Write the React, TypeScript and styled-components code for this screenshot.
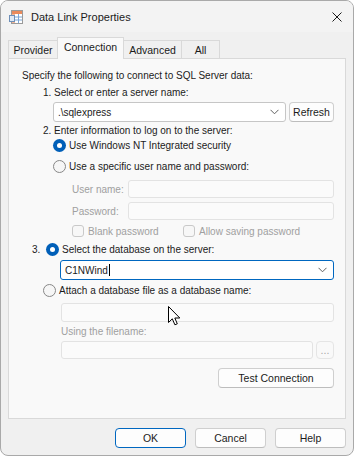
import React from "react";
import styled, { createGlobalStyle } from "styled-components";

const Global = createGlobalStyle`
  html, body { margin: 0; padding: 0; background: #ffffff; }
  body { font-family: "Liberation Sans", Arial, sans-serif; }
  * { box-sizing: border-box; }
`;

const Window = styled.div`
  position: relative;
  width: 354px;
  height: 456px;
  background: #f0f0f0;
  border: 1px solid #a9a9a9;
  border-radius: 8px;
  display: flex;
  flex-direction: column;
  overflow: hidden;
  font-family: "Liberation Sans", Arial, sans-serif;
  font-size: 10px;
  color: #1b1b1b;
`;

const TitleBar = styled.div`
  height: 31px;
  flex: none;
  display: flex;
  align-items: center;
  padding-left: 8px;
  background: #f3f3f3;
`;

const Title = styled.span`
  margin-left: 6px;
  font-size: 11px;
  color: #1b1b1b;
`;

const CloseBox = styled.div`
  margin-left: auto;
  width: 32px;
  height: 31px;
  display: flex;
  align-items: center;
  justify-content: center;
`;

const Body = styled.div`
  flex: 1;
  display: flex;
  flex-direction: column;
  padding: 5px 7px 0 7px;
`;

const TabStrip = styled.div`
  height: 22px;
  display: flex;
  align-items: flex-end;
  margin-bottom: -1px;
  position: relative;
  z-index: 1;
`;

const Tab = styled.div<{ $w: number; $active?: boolean }>`
  width: ${(p) => p.$w}px;
  height: ${(p) => (p.$active ? 22 : 18)}px;
  margin-bottom: ${(p) => (p.$active ? 0 : 1)}px;
  background: ${(p) => (p.$active ? "#f9f9f9" : "#f0f0f0")};
  border: 1px solid #d9d9d9;
  border-bottom: none;
  display: flex;
  align-items: ${(p) => (p.$active ? "flex-start" : "center")};
  justify-content: center;
  padding-top: ${(p) => (p.$active ? 3 : 0)}px;
  font-size: 10.5px;
  color: #1b1b1b;
  & + & {
    margin-left: -1px;
  }
`;

const Panel = styled.div`
  height: 361px;
  flex: none;
  background: #f9f9f9;
  border: 1px solid #d9d9d9;
  display: flex;
  flex-direction: column;
  padding-right: 11px;
`;

const Line = styled.div<{ $mt: number; $ml: number; $dim?: boolean }>`
  height: 14px;
  line-height: 14px;
  margin-top: ${(p) => p.$mt}px;
  margin-left: ${(p) => p.$ml}px;
  color: ${(p) => (p.$dim ? "#a0a0a0" : "#1b1b1b")};
  white-space: nowrap;
`;

const FieldRow = styled.div<{ $mt: number; $ml: number; $h: number }>`
  height: ${(p) => p.$h}px;
  margin-top: ${(p) => p.$mt}px;
  margin-left: ${(p) => p.$ml}px;
  display: flex;
  align-items: center;
  gap: 3px;
`;

const OptionRow = styled.label<{ $mt: number; $ml: number }>`
  height: 14px;
  margin-top: ${(p) => p.$mt}px;
  margin-left: ${(p) => p.$ml}px;
  display: flex;
  align-items: center;
  gap: 3px;
  white-space: nowrap;
`;

const StepNum = styled.span`
  width: 11px;
  flex: none;
`;

const Radio = styled.span<{ $checked?: boolean }>`
  width: 13px;
  height: 13px;
  flex: none;
  border-radius: 50%;
  display: flex;
  align-items: center;
  justify-content: center;
  background: ${(p) => (p.$checked ? "#005fb8" : "#f6f6f6")};
  border: ${(p) => (p.$checked ? "none" : "1px solid #878787")};
  &::after {
    content: "";
    display: ${(p) => (p.$checked ? "block" : "none")};
    width: 5px;
    height: 5px;
    border-radius: 50%;
    background: #ffffff;
  }
`;

const CheckBox = styled.span`
  width: 12px;
  height: 12px;
  flex: none;
  border: 1px solid #c9c9c9;
  border-radius: 3px;
  background: #f7f7f7;
`;

const CheckGroup = styled.span<{ $w: number }>`
  width: ${(p) => p.$w}px;
  display: flex;
  align-items: center;
  gap: 4px;
  color: #a0a0a0;
`;

const FieldLabel = styled.span`
  width: 53px;
  flex: none;
  color: #a0a0a0;
`;

const Combo = styled.div<{ $focused?: boolean }>`
  flex: 1;
  height: 20px;
  background: #ffffff;
  border: 1px solid ${(p) => (p.$focused ? "#0067c0" : "#c6c6c6")};
  border-radius: 3px;
  display: flex;
  align-items: center;
  padding: 0 6px 0 4px;
  color: #1b1b1b;
`;

const ComboText = styled.span`
  flex: 1;
  display: flex;
  align-items: center;
`;

const Caret = styled.span`
  width: 1px;
  height: 12px;
  background: #000;
  margin-left: 1px;
`;

const Field = styled.div<{ $h: number }>`
  flex: 1;
  height: ${(p) => p.$h}px;
  background: #fbfbfb;
  border: 1px solid #e3e3e3;
  border-radius: 3px;
`;

const Button = styled.button<{ $w: number; $h?: number; $default?: boolean; $disabled?: boolean }>`
  width: ${(p) => p.$w}px;
  height: ${(p) => p.$h ?? 20}px;
  flex: none;
  padding: 0;
  font-family: inherit;
  font-size: 10.5px;
  color: ${(p) => (p.$disabled ? "#a8a8a8" : "#1b1b1b")};
  background: ${(p) => (p.$disabled ? "#f9f9f9" : "#fdfdfd")};
  border: 1px solid ${(p) => (p.$default ? "#0067c0" : p.$disabled ? "#e5e5e5" : "#cfcfcf")};
  border-bottom-color: ${(p) => (p.$default ? "#0067c0" : p.$disabled ? "#e5e5e5" : "#bdbdbd")};
  border-radius: 4px;
  display: flex;
  align-items: center;
  justify-content: center;
`;

const ButtonRow = styled.div<{ $mt: number }>`
  margin-top: ${(p) => p.$mt}px;
  display: flex;
  justify-content: flex-end;
  gap: 9px;
`;

const Footer = styled.div`
  margin-top: 9px;
  display: flex;
  justify-content: flex-end;
  gap: 9px;
`;

const Pointer = styled.svg`
  position: absolute;
  left: 167px;
  top: 305px;
`;

const Chevron = () => (
  <svg width="9" height="6" viewBox="0 0 9 6">
    <polyline points="0.5,0.8 4.5,4.8 8.5,0.8" fill="none" stroke="#5f5f5f" strokeWidth="1" />
  </svg>
);

const AppIcon = () => (
  <svg width="16" height="16" viewBox="0 0 16 16">
    <rect x="2.5" y="1.5" width="11" height="13" fill="#ffffff" stroke="#9a9a9a" />
    <rect x="3" y="2" width="10" height="3" fill="#e98a5c" />
    <rect x="3" y="5" width="3" height="9" fill="#f4b595" />
    <line x1="6" y1="8" x2="13" y2="8" stroke="#7aa6d8" />
    <line x1="6" y1="11" x2="13" y2="11" stroke="#7aa6d8" />
    <line x1="9.5" y1="5" x2="9.5" y2="14" stroke="#7aa6d8" />
    <rect x="0.5" y="6.5" width="5" height="6" fill="#dfe9f5" stroke="#6e8fb8" />
  </svg>
);

const CloseIcon = () => (
  <svg width="10" height="10" viewBox="0 0 10 10">
    <line x1="0.5" y1="0.5" x2="9.5" y2="9.5" stroke="#1b1b1b" strokeWidth="1" />
    <line x1="9.5" y1="0.5" x2="0.5" y2="9.5" stroke="#1b1b1b" strokeWidth="1" />
  </svg>
);

export default function App() {
  return (
    <>
      <Global />
      <Window>
        <TitleBar>
          <AppIcon />
          <Title>Data Link Properties</Title>
          <CloseBox>
            <CloseIcon />
          </CloseBox>
        </TitleBar>
        <Body>
          <TabStrip>
            <Tab $w={50}>Provider</Tab>
            <Tab $w={67} $active>
              Connection
            </Tab>
            <Tab $w={59}>Advanced</Tab>
            <Tab $w={39}>All</Tab>
          </TabStrip>
          <Panel>
            <Line $mt={10} $ml={13}>
              Specify the following to connect to SQL Server data:
            </Line>
            <Line $mt={3} $ml={34}>
              1. Select or enter a server name:
            </Line>
            <FieldRow $mt={2} $ml={44} $h={20}>
              <Combo>
                <ComboText>.\sqlexpress</ComboText>
                <Chevron />
              </Combo>
              <Button $w={45}>Refresh</Button>
            </FieldRow>
            <Line $mt={2} $ml={34}>
              2. Enter information to log on to the server:
            </Line>
            <OptionRow $mt={0} $ml={44}>
              <Radio $checked />
              Use Windows NT Integrated security
            </OptionRow>
            <OptionRow $mt={7} $ml={44}>
              <Radio />
              Use a specific user name and password:
            </OptionRow>
            <FieldRow $mt={7} $ml={63} $h={18}>
              <FieldLabel>User name:</FieldLabel>
              <Field $h={18} />
            </FieldRow>
            <FieldRow $mt={4} $ml={63} $h={18}>
              <FieldLabel>Password:</FieldLabel>
              <Field $h={18} />
            </FieldRow>
            <FieldRow $mt={4} $ml={63} $h={14}>
              <CheckGroup $w={108}>
                <CheckBox />
                Blank password
              </CheckGroup>
              <CheckGroup $w={130}>
                <CheckBox />
                Allow saving password
              </CheckGroup>
            </FieldRow>
            <OptionRow $mt={4} $ml={23}>
              <StepNum>3.</StepNum>
              <Radio $checked />
              Select the database on the server:
            </OptionRow>
            <FieldRow $mt={4} $ml={51} $h={20}>
              <Combo $focused>
                <ComboText>
                  C1NWind
                  <Caret />
                </ComboText>
                <Chevron />
              </Combo>
            </FieldRow>
            <OptionRow $mt={3} $ml={34}>
              <Radio />
              Attach a database file as a database name:
            </OptionRow>
            <FieldRow $mt={6} $ml={52} $h={19}>
              <Field $h={19} />
            </FieldRow>
            <Line $mt={3} $ml={52} $dim>
              Using the filename:
            </Line>
            <FieldRow $mt={2} $ml={52} $h={18}>
              <Field $h={18} />
              <Button $w={18} $h={18} $disabled>
                ...
              </Button>
            </FieldRow>
            <ButtonRow $mt={9}>
              <Button $w={116}>Test Connection</Button>
            </ButtonRow>
          </Panel>
          <Footer>
            <Button $w={71} $default>
              OK
            </Button>
            <Button $w={71}>Cancel</Button>
            <Button $w={71}>Help</Button>
          </Footer>
        </Body>
        <Pointer width="13" height="20" viewBox="0 0 13 20">
          <path
            d="M0.5 0.5 L0.5 16.5 L4.3 12.8 L6.9 18.8 L9.3 17.8 L6.8 12 L11.8 12 Z"
            fill="#ffffff"
            stroke="#000000"
            strokeWidth="1"
            strokeLinejoin="round"
          />
        </Pointer>
      </Window>
    </>
  );
}
